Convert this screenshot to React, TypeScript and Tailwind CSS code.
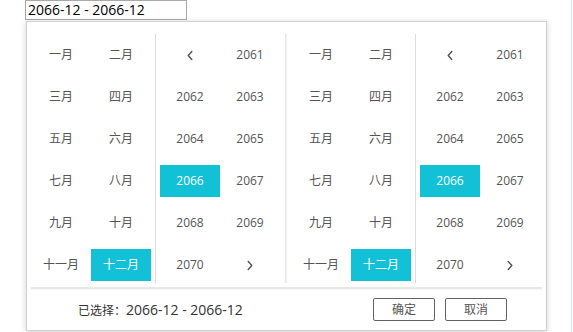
import React from "react";

const months = [
  "一月", "二月", "三月", "四月", "五月", "六月",
  "七月", "八月", "九月", "十月", "十一月", "十二月",
];
const years = ["prev", "2061", "2062", "2063", "2064", "2065", "2066", "2067", "2068", "2069", "2070", "next"];

const font = "font-['Open_Sans','Noto_Sans_CJK_SC',sans-serif]";

const Chevron = ({ dir }: { dir: "prev" | "next" }) => (
  <svg width="8" height="11" viewBox="0 0 8 11" fill="none">
    <polyline
      points={dir === "prev" ? "5.8,1.5 2.2,5.5 5.8,9.5" : "2.2,1.5 5.8,5.5 2.2,9.5"}
      stroke="#505050"
      strokeWidth="1.4"
      strokeLinecap="round"
      strokeLinejoin="round"
    />
  </svg>
);

const Cell = ({ active, children }: { active?: boolean; children: React.ReactNode }) => (
  <div
    className={`flex h-8 w-[60px] items-center justify-center text-[12px] ${
      active ? "bg-[#13c1d7] text-white" : "text-[#555]"
    }`}
  >
    {children}
  </div>
);

const MonthPanel = () => (
  <div className="grid w-[128px] grid-cols-2 content-start gap-y-[10px] px-1 pt-[5px]">
    {months.map((m) => (
      <Cell key={m} active={m === "十二月"}>
        {m}
      </Cell>
    ))}
  </div>
);

const YearPanel = ({ width }: { width: string }) => (
  <div className={`grid ${width} grid-cols-[60px_60px] content-start gap-y-[10px] pl-1 pt-[5px]`}>
    {years.map((y) =>
      y === "prev" || y === "next" ? (
        <Cell key={y}>
          <Chevron dir={y} />
        </Cell>
      ) : (
        <Cell key={y} active={y === "2066"}>
          {y}
        </Cell>
      )
    )}
  </div>
);

export default function App() {
  return (
    <div className={`h-[332px] w-[572px] border-r border-[#d3eef6] bg-white pl-[25px] ${font}`}>
      <div className="flex h-[20px] w-[162px] items-center border border-[#a9a9a9] pl-[2px] text-[14px] leading-none text-black">
        2066-12 - 2066-12
      </div>

      <div className="ml-[1px] mt-[1px] flex h-[310px] w-[521px] flex-col border border-[#d0d0d0] shadow-[0_1px_6px_rgba(0,0,0,0.18)]">
        <div className="mt-[12px] flex h-[249px]">
          <MonthPanel />
          <div className="w-px bg-[#dcdcdc]" />
          <YearPanel width="w-[129px]" />
          <div className="w-px bg-[#e6e6e6]" />
          <div className="w-px bg-[#f0f0f0]" />
          <MonthPanel />
          <div className="w-px bg-[#dcdcdc]" />
          <YearPanel width="w-[130px]" />
        </div>

        <div className="mx-[4px] mt-[4px] h-[2px] bg-[#e8e8e8] shadow-[0_1px_1px_rgba(0,0,0,0.04)]" />

        <div className="flex flex-1 items-center pl-[51px] pr-[39px]">
          <div className="flex items-baseline text-[#333]">
            <span className="text-[12px]">已选择：</span>
            <span className="text-[14px]">2066-12 - 2066-12</span>
          </div>
          <div className="ml-auto flex gap-[10px]">
            <button className="flex h-[23px] w-[62px] items-center justify-center rounded-[2px] border border-[#5f6368] text-[12px] text-[#555]">
              确定
            </button>
            <button className="flex h-[23px] w-[62px] items-center justify-center rounded-[2px] border border-[#5f6368] text-[12px] text-[#555]">
              取消
            </button>
          </div>
        </div>
      </div>
    </div>
  );
}
